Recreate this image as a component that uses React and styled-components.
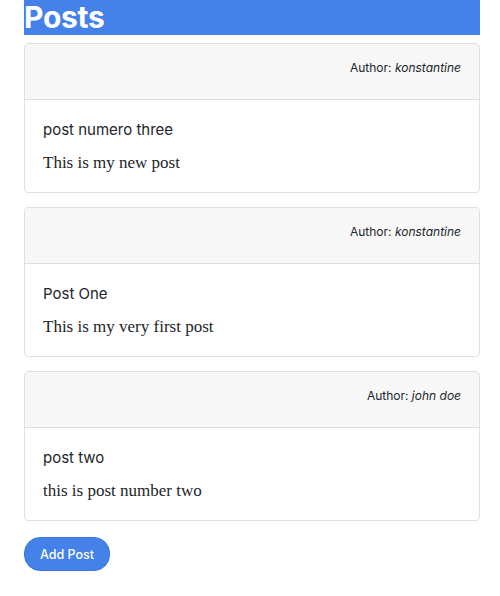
import styled, { createGlobalStyle } from "styled-components";

const GlobalStyle = createGlobalStyle`
  body {
    margin: 0 20px 0 24px;
    background: #fff;
    font-family: Inter, "Noto Sans", sans-serif;
    color: #212529;
  }
`;

const Title = styled.h1`
  margin: 0;
  background: #4481e8;
  color: #fff;
  font-size: 30px;
  font-weight: 700;
  line-height: 35px;
  letter-spacing: -0.3px;
`;

const List = styled.div`
  display: flex;
  flex-direction: column;
  gap: 14px;
  margin-top: 8px;
`;

const Card = styled.div`
  border: 1px solid #e0e0e0;
  border-radius: 4px;
  overflow: hidden;
`;

const CardHeader = styled.div`
  height: 56px;
  box-sizing: border-box;
  padding: 15px 18px 0;
  background: #f7f7f7;
  border-bottom: 1px solid #dedede;
  text-align: right;
  font-size: 12px;
  line-height: 18px;
`;

const CardBody = styled.div`
  padding: 20px 18px 19px;
`;

const PostTitle = styled.div`
  font-size: 15px;
  line-height: 20px;
  margin-bottom: 13px;
`;

const PostText = styled.p`
  margin: 0;
  font-family: "Liberation Serif", Georgia, serif;
  font-size: 17px;
  line-height: 20px;
`;

const Button = styled.button`
  margin-top: 16px;
  height: 34px;
  padding: 0 15px;
  border: 1px solid #3b78e0;
  border-radius: 16px;
  background: #4481e8;
  color: #fff;
  font-family: Inter, sans-serif;
  font-size: 12.5px;
  font-weight: 500;
`;

const posts = [
  { title: "post numero three", body: "This is my new post", author: "konstantine" },
  { title: "Post One", body: "This is my very first post", author: "konstantine" },
  { title: "post two", body: "this is post number two", author: "john doe" },
];

export default function App() {
  return (
    <>
      <GlobalStyle />
      <Title>Posts</Title>
      <List>
        {posts.map((p) => (
          <Card key={p.title}>
            <CardHeader>
              Author: <em>{p.author}</em>
            </CardHeader>
            <CardBody>
              <PostTitle>{p.title}</PostTitle>
              <PostText>{p.body}</PostText>
            </CardBody>
          </Card>
        ))}
      </List>
      <Button>Add Post</Button>
    </>
  );
}
